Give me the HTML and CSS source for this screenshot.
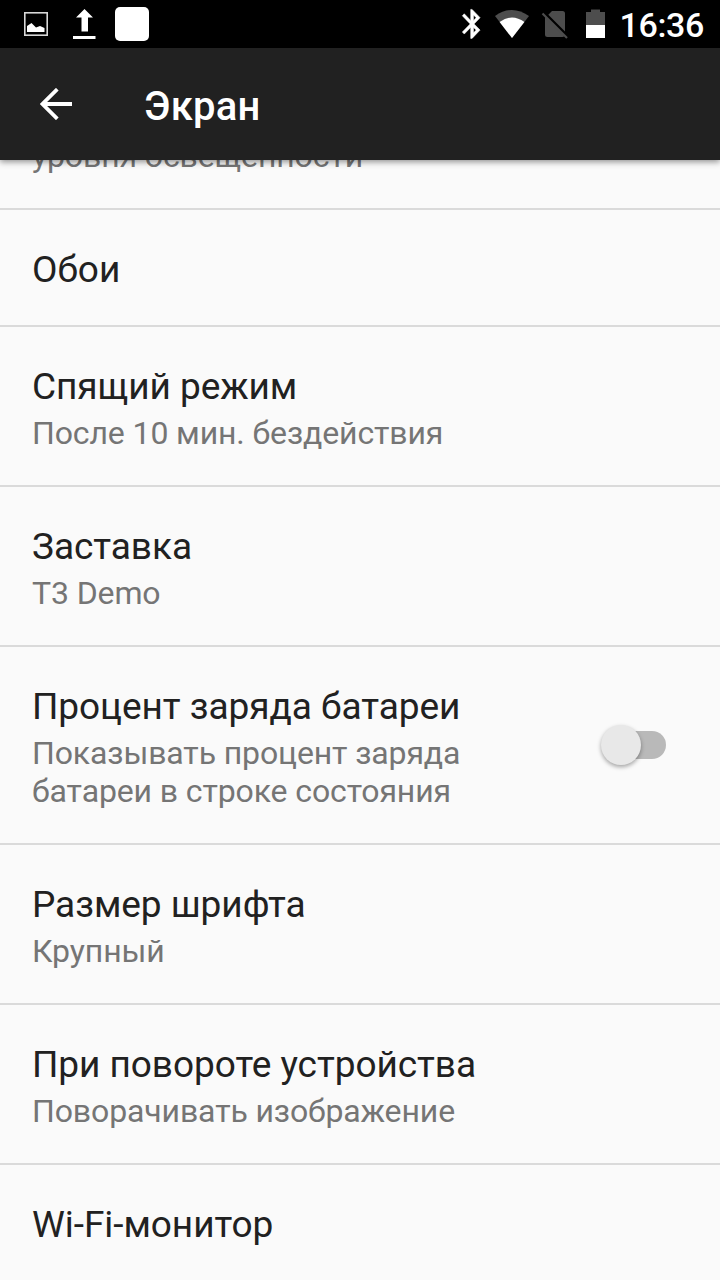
FILE: index.html
```html
<!DOCTYPE html>
<html lang="ru">
<head>
<meta charset="utf-8">
<title>Экран</title>
<link rel="stylesheet" href="styles.css">
</head>
<body>
<div class="screen">
  <header class="status-bar">
    <svg class="status-icons" width="160" height="48" viewBox="0 0 160 48" aria-hidden="true">
      <rect x="24.8" y="12.8" width="22.4" height="22.4" fill="none" stroke="#d8d8d8" stroke-width="1.6"/>
      <path d="M27 32V26L31.500 23L36 27.500L40 26L44.500 28V32Z" fill="#fff"/>
      <path d="M84.500 9L93 17.500H88V31.500H81.500V17.500H76Z M73 36H95.500V39H73Z" fill="#fff"/>
      <rect x="115" y="7" width="34" height="34" rx="5" fill="#fff"/>
    </svg>
    <div class="status-right">
      <svg width="160" height="48" viewBox="450 0 160 48" aria-hidden="true">
        <path transform="translate(455.300 6.500) scale(1.400 1.450)" d="M17.710 7.710L12 2h-1v7.590L6.410 5 5 6.410 10.590 12 5 17.590 6.410 19 11 14.410V22h1l5.710-5.710-4.300-4.290 4.300-4.290zM13 5.830l1.880 1.880L13 9.590V5.830zm1.880 10.460L13 18.170v-3.760l1.880 1.880z" fill="#fff" stroke="#fff" stroke-width=".35"/>
        <path d="M495 16Q512 4 529 16L512 38Z" fill="#4d4d4d"/>
        <path d="M499.600 22Q512 12.800 524.400 22L512 38Z" fill="#fff"/>
        <path d="M552 11H562.500Q565 11 565 13.500V31.500L548.300 14.800ZM545 16L564.500 36Q563.500 37 562.500 37H547.500Q545 37 545 34.500Z" fill="#4d4d4d"/>
        <path d="M542.500 13.500L567 38" fill="none" stroke="#4d4d4d" stroke-width="2.200"/>
        <path d="M586 12H591V9.500H600V12H605V25H586Z" fill="#4d4d4d"/>
        <path d="M586 25H605V38H586Z" fill="#fff"/>
      </svg>
      <span class="clock">16:36</span>
    </div>
  </header>
  <div class="toolbar">
    <svg width="32" height="32" viewBox="0 0 32 32" aria-label="Назад"><path d="M32 16H3M17.300 1.200L2.500 16L17.300 30.800" fill="none" stroke="#fff" stroke-width="3.800"/></svg>
    <h1 class="toolbar-title">Экран</h1>
  </div>
  <main class="settings">
    <section class="item item-scrolled"><p class="summary">уровня освещенности</p></section>
    <section class="item"><h2 class="title">Обои</h2></section>
    <section class="item"><h2 class="title">Спящий режим</h2><p class="summary">После 10 мин. бездействия</p></section>
    <section class="item"><h2 class="title">Заставка</h2><p class="summary">T3 Demo</p></section>
    <section class="item item-switch">
      <div>
        <h2 class="title">Процент заряда батареи</h2>
        <p class="summary">Показывать процент заряда<br>батареи в строке состояния</p>
      </div>
      <div class="switch"><span class="thumb"></span></div>
    </section>
    <section class="item"><h2 class="title">Размер шрифта</h2><p class="summary">Крупный</p></section>
    <section class="item"><h2 class="title">При повороте устройства</h2><p class="summary">Поворачивать изображение</p></section>
    <section class="item"><h2 class="title">Wi-Fi-монитор</h2></section>
  </main>
</div>
</body>
</html>
```

FILE: styles.css
```css
* { box-sizing: border-box; }
body { margin: 0; font-family: Roboto, "Noto Sans", sans-serif; }
h1, h2, p { margin: 0; }
svg { display: block; flex: none; }

.screen {
  display: flex;
  flex-direction: column;
  width: 720px;
  height: 1280px;
  overflow: hidden;
  background: #fafafa;
}

.status-bar {
  display: flex;
  flex: none;
  justify-content: space-between;
  height: 48px;
  background: #000;
}
.status-right { display: flex; width: 270px; }
.clock {
  margin-left: 9.5px;
  color: #fff;
  font-size: 34px;
  font-weight: 500;
  letter-spacing: -0.35px;
  line-height: 50px;
  white-space: nowrap;
}

.toolbar {
  display: flex;
  flex: none;
  align-items: center;
  gap: 72px;
  height: 112px;
  padding-left: 40px;
  background: #212121;
  box-shadow: 0 2px 6px rgba(0, 0, 0, 0.42);
  z-index: 1;
}
.toolbar-title {
  padding-top: 6px;
  color: #fff;
  font-size: 40px;
  font-weight: 500;
  letter-spacing: 0.25px;
  line-height: 48px;
}

.settings { flex: 1; min-height: 0; overflow: hidden; }
.item {
  padding: 38px 32px 33px;
  border-bottom: 2px solid #dadada;
}
.item:last-child { border-bottom: 0; }
.item-scrolled {
  display: flex;
  flex-direction: column;
  justify-content: flex-end;
  height: 50px;
  padding-top: 0;
}
.title {
  height: 44px;
  color: #212121;
  font-size: 37px;
  font-weight: 400;
  letter-spacing: -0.05px;
  line-height: 44px;
  white-space: nowrap;
}
.summary {
  color: #757575;
  font-size: 32px;
  letter-spacing: -0.12px;
  line-height: 38px;
  white-space: nowrap;
}
.title + .summary { margin-top: 5px; }

.item-switch { display: flex; justify-content: space-between; }
.switch {
  display: flex;
  align-items: center;
  width: 62px;
  height: 28px;
  margin: 46px 22px 0 0;
  border-radius: 14px;
  background: #b9b9b9;
}
.thumb {
  flex: none;
  width: 40px;
  height: 40px;
  margin-left: -3px;
  border-radius: 50%;
  background: #e8e8e8;
  box-shadow: 0 2px 4px rgba(0, 0, 0, 0.35);
}
```
